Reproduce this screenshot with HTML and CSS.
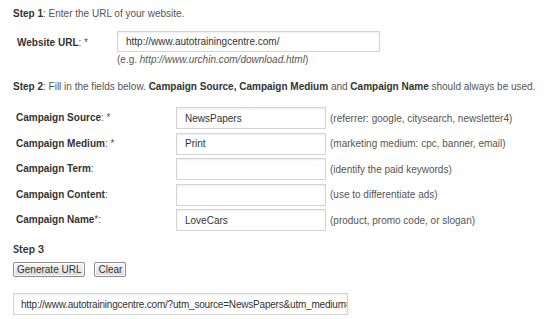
FILE: index.html
```html
<!DOCTYPE html>
<html lang="en">
<head>
    <meta charset="UTF-8">
    <title>URL Builder</title>
    <link rel="stylesheet" href="styles.css">
</head>
<body>
    <!-- Step 1 -->
    <p class="step"><b>Step 1</b>: Enter the URL of your website.</p>
    <div class="site-row">
        <div class="site-label"><b>Website URL</b>: *</div>
        <div class="site-field">
            <input class="text-input site-input" type="text" value="http://www.autotrainingcentre.com/">
            <div class="example">(e.g. <i>http://www.urchin.com/download.html</i>)</div>
        </div>
    </div>

    <!-- Step 2 -->
    <p class="step step-two"><b>Step 2</b>: Fill in the fields below. <b>Campaign Source, Campaign Medium</b> and <b>Campaign Name</b> should always be used.</p>
    <div class="fields">
        <div class="field-label"><b>Campaign Source</b>: *</div>
        <input class="text-input" type="text" value="NewsPapers">
        <div class="hint">(referrer: google, citysearch, newsletter4)</div>

        <div class="field-label"><b>Campaign Medium</b>: *</div>
        <input class="text-input" type="text" value="Print">
        <div class="hint">(marketing medium: cpc, banner, email)</div>

        <div class="field-label"><b>Campaign Term</b>:</div>
        <input class="text-input" type="text" value="">
        <div class="hint">(identify the paid keywords)</div>

        <div class="field-label"><b>Campaign Content</b>:</div>
        <input class="text-input" type="text" value="">
        <div class="hint">(use to differentiate ads)</div>

        <div class="field-label"><b>Campaign Name</b>*:</div>
        <input class="text-input" type="text" value="LoveCars">
        <div class="hint">(product, promo code, or slogan)</div>
    </div>

    <!-- Step 3 -->
    <div class="step-three">Step 3</div>
    <div class="buttons">
        <button class="btn">Generate URL</button>
        <button class="btn">Clear</button>
    </div>
    <input class="text-input result" type="text" value="http://www.autotrainingcentre.com/?utm_source=NewsPapers&amp;utm_medium=Print&amp;utm_campaign=LoveCars">
</body>
</html>
```

FILE: styles.css
```css
/* General styles */
body {
    font-family: 'Liberation Sans', Arial, sans-serif;
    font-size: 10px;
    color: #555;
    background: #fff;
    margin: 0;
    padding: 7px 13px 0;
}

b {
    color: #333;
}

.step {
    margin: 0;
    line-height: 14px;
}

.step-two {
    margin-top: 13px;
}

/* Inputs */
.text-input {
    box-sizing: border-box;
    font-family: 'Liberation Sans', Arial, sans-serif;
    font-size: 10px;
    color: #333;
    border: 1px solid #d4d4d4;
    box-shadow: inset 0 1px 2px rgba(0, 0, 0, 0.08);
    padding: 0 0 0 8px;
    height: 22px;
    width: 150px;
    margin: 0;
    outline: none;
}

/* Website URL */
.site-row {
    display: flex;
    margin-top: 10px;
    padding-left: 4px;
}

.site-label {
    width: 100px;
    padding-top: 5px;
    line-height: 14px;
}

.site-input {
    width: 263px;
    height: 21px;
}

.example {
    line-height: 14px;
    margin-top: 1px;
}

/* Campaign fields */
.fields {
    display: grid;
    grid-template-columns: 156px 150px auto;
    column-gap: 4px;
    row-gap: 3.5px;
    align-items: center;
    margin-top: 13px;
    padding-left: 3px;
}

.field-label {
    line-height: 14px;
}

.hint {
    white-space: nowrap;
}

/* Step 3 */
.step-three {
    font-family: Lato, 'Liberation Sans', sans-serif;
    font-weight: bold;
    font-size: 11px;
    color: #333;
    margin-top: 11px;
    line-height: 14px;
}

.buttons {
    display: flex;
    gap: 9px;
    margin-top: 6px;
}

.btn {
    font-family: 'Liberation Sans', Arial, sans-serif;
    font-size: 10px;
    color: #333;
    height: 15px;
    padding: 0 3px;
    border: 1px solid #8c8c8c;
    border-radius: 2px;
    background: linear-gradient(#f6f6f6, #dcdcdc);
    box-shadow: inset 0 0 0 1px #fff;
}

.result {
    display: block;
    width: 335px;
    height: 22px;
    margin-top: 16px;
    padding-left: 7px;
    letter-spacing: -0.2px;
}
```
